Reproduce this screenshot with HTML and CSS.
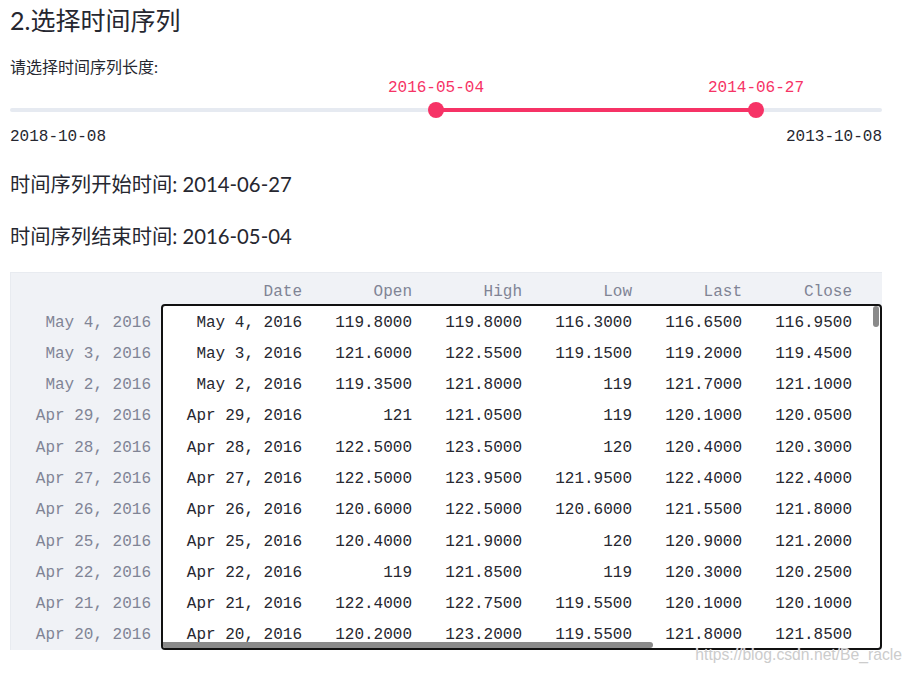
FILE: index.html
```html
<!DOCTYPE html>
<html lang="zh">
<head>
<meta charset="utf-8">
<title>选择时间序列</title>
<link rel="stylesheet" href="styles.css">
</head>
<body>
<main class="page">
  <h2 class="title">2.选择时间序列</h2>
  <div class="label">请选择时间序列长度:</div>
  <div class="slider">
    <div class="values">
      <span class="value" style="left:48.85%">2016-05-04</span>
      <span class="value" style="left:85.55%">2014-06-27</span>
    </div>
    <div class="track">
      <div class="fill" style="left:48.85%;width:36.7%"></div>
      <div class="thumb" style="left:48.85%"></div>
      <div class="thumb" style="left:85.55%"></div>
    </div>
    <div class="ticks"><span>2018-10-08</span><span>2013-10-08</span></div>
  </div>
  <p class="info">时间序列开始时间: 2014-06-27</p>
  <p class="info info-end">时间序列结束时间: 2016-05-04</p>

  <section class="frame">
    <div class="head">
      <div class="idx"></div>
      <div class="c c-date">Date</div>
      <div class="c">Open</div>
      <div class="c">High</div>
      <div class="c">Low</div>
      <div class="c">Last</div>
      <div class="c">Close</div>
    </div>
    <div class="body">
      <div class="index">
        <div class="r">May 4, 2016</div>
        <div class="r">May 3, 2016</div>
        <div class="r">May 2, 2016</div>
        <div class="r">Apr 29, 2016</div>
        <div class="r">Apr 28, 2016</div>
        <div class="r">Apr 27, 2016</div>
        <div class="r">Apr 26, 2016</div>
        <div class="r">Apr 25, 2016</div>
        <div class="r">Apr 22, 2016</div>
        <div class="r">Apr 21, 2016</div>
        <div class="r">Apr 20, 2016</div>
      </div>
      <div class="box">
        <div class="rows">
          <div class="row"><div class="c c-date">May 4, 2016</div><div class="c">119.8000</div><div class="c">119.8000</div><div class="c">116.3000</div><div class="c">116.6500</div><div class="c">116.9500</div></div>
          <div class="row"><div class="c c-date">May 3, 2016</div><div class="c">121.6000</div><div class="c">122.5500</div><div class="c">119.1500</div><div class="c">119.2000</div><div class="c">119.4500</div></div>
          <div class="row"><div class="c c-date">May 2, 2016</div><div class="c">119.3500</div><div class="c">121.8000</div><div class="c">119</div><div class="c">121.7000</div><div class="c">121.1000</div></div>
          <div class="row"><div class="c c-date">Apr 29, 2016</div><div class="c">121</div><div class="c">121.0500</div><div class="c">119</div><div class="c">120.1000</div><div class="c">120.0500</div></div>
          <div class="row"><div class="c c-date">Apr 28, 2016</div><div class="c">122.5000</div><div class="c">123.5000</div><div class="c">120</div><div class="c">120.4000</div><div class="c">120.3000</div></div>
          <div class="row"><div class="c c-date">Apr 27, 2016</div><div class="c">122.5000</div><div class="c">123.9500</div><div class="c">121.9500</div><div class="c">122.4000</div><div class="c">122.4000</div></div>
          <div class="row"><div class="c c-date">Apr 26, 2016</div><div class="c">120.6000</div><div class="c">122.5000</div><div class="c">120.6000</div><div class="c">121.5500</div><div class="c">121.8000</div></div>
          <div class="row"><div class="c c-date">Apr 25, 2016</div><div class="c">120.4000</div><div class="c">121.9000</div><div class="c">120</div><div class="c">120.9000</div><div class="c">121.2000</div></div>
          <div class="row"><div class="c c-date">Apr 22, 2016</div><div class="c">119</div><div class="c">121.8500</div><div class="c">119</div><div class="c">120.3000</div><div class="c">120.2500</div></div>
          <div class="row"><div class="c c-date">Apr 21, 2016</div><div class="c">122.4000</div><div class="c">122.7500</div><div class="c">119.5500</div><div class="c">120.1000</div><div class="c">120.1000</div></div>
          <div class="row"><div class="c c-date">Apr 20, 2016</div><div class="c">120.2000</div><div class="c">123.2000</div><div class="c">119.5500</div><div class="c">121.8000</div><div class="c">121.8500</div></div>
        </div>
        <div class="vscroll"></div>
        <div class="hscroll"></div>
      </div>
    </div>
  </section>
  <div class="watermark">https://blog.csdn.net/Be_racle</div>
</main>
</body>
</html>
```
FILE: styles.css
```css
html, body {
  margin: 0;
  padding: 0;
  background: #ffffff;
}
body {
  font-family: Lato, "Noto Sans CJK SC", sans-serif;
  color: #262730;
  width: 912px;
  height: 673px;
  overflow: hidden;
}
.page {
  position: relative;
  padding: 5px 30px 0 10px;
  height: 668px;
}
.title {
  margin: 0;
  font-size: 25px;
  font-weight: 400;
  line-height: 30px;
}
.label {
  margin-top: 22px;
  font-size: 16px;
  line-height: 20px;
}
.slider {
  font-family: "Liberation Mono", monospace;
  font-size: 16px;
}
.values {
  position: relative;
  top: 1px;
  height: 20px;
  line-height: 20px;
  color: #f63366;
}
.value {
  position: absolute;
  top: 0;
  transform: translateX(-50%);
  white-space: nowrap;
}
.track {
  position: relative;
  margin-top: 11px;
  height: 4px;
  border-radius: 2px;
  background: #e6eaf1;
}
.fill {
  position: absolute;
  top: 0;
  height: 4px;
  background: #f63366;
}
.thumb {
  position: absolute;
  top: -6px;
  width: 16px;
  height: 16px;
  margin-left: -8px;
  border-radius: 50%;
  background: #f63366;
}
.ticks {
  margin-top: 15px;
  display: flex;
  justify-content: space-between;
  line-height: 20px;
  color: #262730;
}
.info {
  margin: 25px 0 0;
  font-size: 20.3px;
  line-height: 24px;
}
.info-end {
  margin-top: 28px;
}
.frame {
  margin-top: 24px;
  width: 872px;
  box-sizing: border-box;
  background: #f0f2f6;
  border-top: 1px solid #e8ebf0;
  border-left: 1px solid #e8ebf0;
  font-family: "Liberation Mono", monospace;
  font-size: 16px;
}
.head {
  display: flex;
  height: 31px;
  line-height: 38px;
  color: #808495;
}
.idx {
  width: 151px;
  flex: none;
}
.c {
  width: 110px;
  flex: none;
  box-sizing: border-box;
  padding-right: 10px;
  text-align: right;
  white-space: nowrap;
}
.c-date {
  width: 150px;
}
.body {
  display: flex;
  height: 346px;
}
.index {
  width: 150px;
  flex: none;
  padding-top: 3.5px;
  overflow: hidden;
  color: #808495;
}
.r {
  height: 31.3px;
  line-height: 31.3px;
  padding-right: 10px;
  text-align: right;
  white-space: nowrap;
}
.box {
  position: relative;
  width: 722px;
  height: 346px;
  box-sizing: border-box;
  border: 2px solid #111111;
  border-radius: 4px;
  background: #ffffff;
  overflow: hidden;
}
.rows {
  padding-top: 1.5px;
}
.row {
  display: flex;
  height: 31.3px;
  line-height: 31.3px;
  color: #262730;
}
.box .c-date {
  width: 149px;
}
.vscroll {
  position: absolute;
  top: 0;
  right: 1px;
  width: 6px;
  height: 21px;
  border-radius: 3px;
  background: #8a8a8a;
}
.hscroll {
  position: absolute;
  left: 0;
  bottom: 0;
  width: 490px;
  height: 6px;
  border-radius: 0 3px 3px 0;
  background: #8a8a8a;
}
.watermark {
  position: absolute;
  right: 10px;
  top: 645px;
  font-family: "Liberation Sans", sans-serif;
  font-size: 15.7px;
  line-height: 20px;
  color: #cccccc;
  text-shadow: 0 0 1px #ffffff;
}
```
